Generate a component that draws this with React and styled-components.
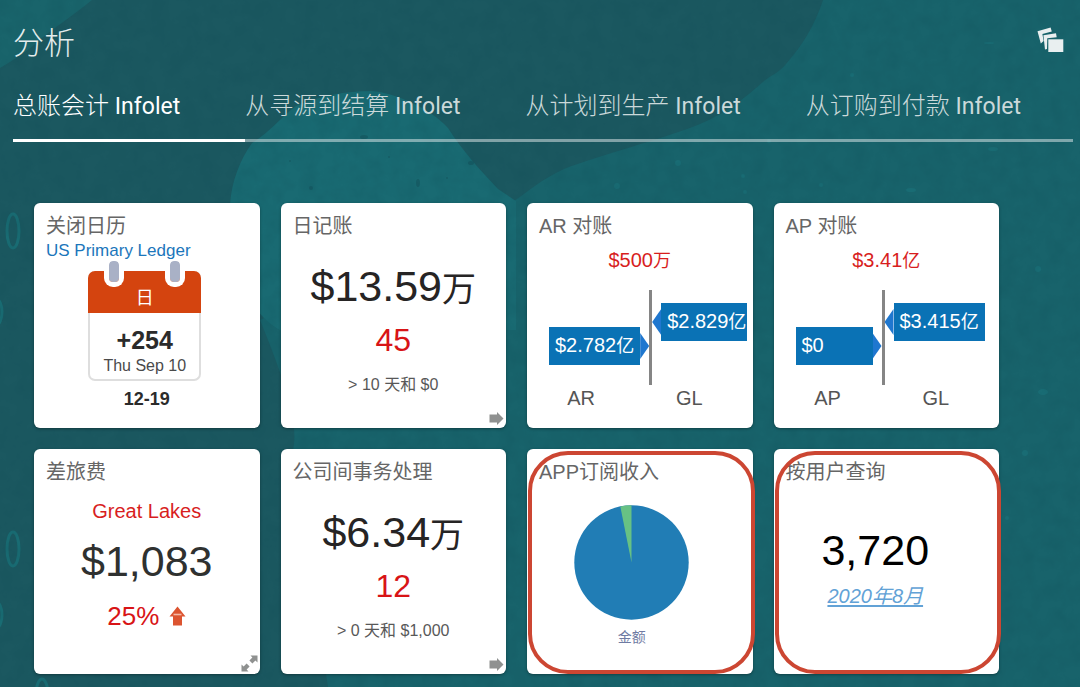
import React from "react";
import styled, { createGlobalStyle } from "styled-components";

const GlobalStyle = createGlobalStyle`
  *, *::before, *::after { box-sizing: border-box; }
  body {
    margin: 0;
    background: #1b575f;
    font-family: "Liberation Sans", "Noto Sans CJK SC", sans-serif;
    color: #2b2b2b;
  }
  h1, h2, p { margin: 0; font-weight: 400; }
  button { font: inherit; border: 0; padding: 0; background: none; cursor: pointer; }
`;

const Page = styled.div`
  position: relative;
  min-height: 100vh;
  overflow: hidden;
  padding-bottom: 13px;
`;

const Backdrop = styled.svg`
  position: absolute;
  inset: 0;
  width: 100%;
  height: 100%;
  z-index: -1;
`;

const Header = styled.header`
  display: flex;
  justify-content: space-between;
  align-items: flex-start;
  padding: 21px 16px 0 13px;
`;

const PageTitle = styled.h1`
  font-size: 31px;
  line-height: 46px;
  font-weight: 300;
  color: #e3ecec;
`;

const IconButton = styled.button`
  display: flex;
  padding: 5px 0;
  color: #e9eff0;
`;

const TabBar = styled.div`
  display: flex;
  margin: 23px 7px 0 13px;
`;

const Tab = styled.button`
  flex: 0 0 auto;
  padding: 0 65px 16px 0;
  border-bottom: 3px solid ${(p) => (p.$active ? "#ffffff" : "rgba(255,255,255,0.45)")};
  color: ${(p) => (p.$active ? "#ffffff" : "#cbd9da")};
  font-family: Roboto, "Noto Sans CJK SC", sans-serif;
  font-size: 24px;
  line-height: 32px;
  font-weight: 300;
  text-align: left;
  white-space: nowrap;

  &:last-child { flex: 1 0 auto; padding-right: 0; }
`;

const TabLatin = styled.span`
  font-size: 23px;
  font-weight: 400;
`;

const Grid = styled.main`
  display: grid;
  grid-template-columns: repeat(4, minmax(0, 1fr));
  gap: 21px;
  padding: 61px 81px 0 34px;
`;

const Card = styled.section`
  position: relative;
  display: flex;
  flex-direction: column;
  min-height: 225px;
  padding-top: 9px;
  border-radius: 6px;
  background: #fff;
  box-shadow: 0 1px 3px rgba(0, 0, 0, 0.35);

  &::after {
    content: "";
    display: ${(p) => (p.$marked ? "block" : "none")};
    position: absolute;
    inset: 2px -2px 0 1px;
    border: 4px solid #cc4632;
    border-radius: 40px;
    pointer-events: none;
  }
`;

const CardTitle = styled.h2`
  padding-left: 12px;
  font-size: 20px;
  line-height: 28px;
  color: #666;
`;

const LedgerLink = styled.a`
  padding-left: 12px;
  font-size: 17px;
  line-height: 22px;
  color: #1b76bb;
  text-decoration: none;
`;

const Calendar = styled.div`
  position: relative;
  align-self: center;
  width: 113px;
  margin: 9px 4px 0 0;
  border: 2px solid #dedede;
  border-top: 0;
  border-radius: 7px;
  text-align: center;
`;

const CalendarHead = styled.div`
  margin: 0 -2px;
  padding-top: 12px;
  border-radius: 7px 7px 0 0;
  background: #d4440f;
  color: #fff;
  font-size: 18px;
  line-height: 30px;
`;

const CalendarRing = styled.span`
  position: absolute;
  top: -10px;
  ${(p) => p.$side}: 14px;
  width: 20px;
  height: 26px;
  border: 5px solid #fff;
  border-top: 0;
  border-radius: 9px / 4px 4px 9px 9px;
  background: #a9b1c6;
  background-clip: padding-box;
`;

const DayCount = styled.p`
  padding-top: 13px;
  font-size: 25px;
  line-height: 28px;
  font-weight: 700;
`;

const DayLabel = styled.p`
  padding-bottom: 1px;
  font-size: 16px;
  line-height: 24px;
  color: #4a4a4a;
`;

const Period = styled.p`
  margin-top: 6px;
  font-size: 18px;
  line-height: 24px;
  font-weight: 700;
  text-align: center;
`;

const Stack = styled.div`
  display: flex;
  flex-direction: column;
  align-items: center;
  padding-top: ${(p) => p.$top}px;
  padding-right: ${(p) => p.$right || 0}px;
`;

const Amount = styled.p`
  font-size: 43px;
  line-height: 50px;
  color: ${(p) => p.$color || "#262424"};
`;

const Unit = styled.span`
  font-size: ${(p) => p.$size}px;
`;

const Count = styled.p`
  margin-top: 6px;
  font-size: 32px;
  line-height: 40px;
  color: #d81416;
`;

const Condition = styled.p`
  margin-top: 13px;
  font-size: 16px;
  line-height: 24px;
  color: #585858;
`;

const Alert = styled.p`
  font-size: 20px;
  line-height: 24px;
  color: #d81e1e;
  text-align: center;
`;

const Change = styled.p`
  display: flex;
  align-items: center;
  gap: 10px;
  margin-top: 14px;
  font-size: 26px;
  line-height: 32px;
  color: #d81416;
`;

const Balance = styled.div`
  display: flex;
  height: 95px;
  margin: 17px 6px 0 22px;
  overflow: hidden;
`;

const Divider = styled.div`
  flex: none;
  width: 3px;
  background: #858585;
`;

const Flag = styled.div`
  flex: none;
  display: flex;
  flex-direction: ${(p) => (p.$side === "left" ? "row" : "row-reverse")};
  align-items: center;
  align-self: flex-start;
  margin-top: ${(p) => (p.$side === "left" ? 37 : 13)}px;

  &::after {
    content: "";
    width: 9px;
    height: 26px;
    background: #1f77cf;
    clip-path: ${(p) =>
      p.$side === "left"
        ? "polygon(0 0, 100% 50%, 0 100%)"
        : "polygon(100% 0, 0 50%, 100% 100%)"};
  }
`;

const FlagBody = styled.span`
  min-width: 77px;
  padding: 0 6px;
  background: #0a72b5;
  color: #fff;
  font-size: 20px;
  line-height: 37px;
  white-space: nowrap;
`;

const Sides = styled.div`
  display: grid;
  grid-template-columns: 1fr 1fr;
  padding: 1px 9px 0 0;
  font-size: 20px;
  line-height: 24px;
  color: #555;
  text-align: center;
`;

const ChartLabel = styled.p`
  margin-top: 7px;
  font-size: 14px;
  line-height: 20px;
  color: #6f7ba3;
`;

const MonthLink = styled.a`
  margin-top: 7px;
  font-size: 20px;
  line-height: 28px;
  font-style: italic;
  color: #62a2d6;
  text-decoration: underline;
  text-underline-offset: 2px;
`;

const CornerButton = styled.button`
  position: absolute;
  right: 2px;
  bottom: 2px;
  display: flex;
  color: #8f9190;
`;

function Wallpaper() {
  return (
    <Backdrop viewBox="0 0 1080 687" preserveAspectRatio="xMidYMid slice" aria-hidden="true">
      <defs>
        <filter
          id="grain"
          x="0"
          y="0"
          width="100%"
          height="100%"
          colorInterpolationFilters="sRGB"
        >
          <feTurbulence type="fractalNoise" baseFrequency="0.06" numOctaves="4" seed="4" />
          <feColorMatrix values="0 0 0 0 0.05  0 0 0 0 0.28  0 0 0 0 0.32  2 0 0 0 -0.7" />
        </filter>
      </defs>
      <rect width="1080" height="687" fill="#1b5860" />
      <path d="M0 0H92C70 18 50 30 34 45C20 56 10 62 0 68Z" fill="#19646b" />
      <path
        d="M823 0C815 25 802 46 786 64C780 72 770 76 764 81C748 96 722 116 695 126C662 139 600 155 564 169C540 180 528 192 514 201L260 320C280 370 300 420 293 450C300 520 315 600 328 687H1080V0Z"
        fill="#18636b"
      />
      <path
        d="M230 204C232 180 240 160 252 143C270 132 282 116 296 106C320 96 345 91 372 91C395 93 430 108 448 128C462 150 480 170 498 189L516 201V330H280C250 315 222 260 230 204Z"
        fill="#196a72"
      />
      <g fill="#145059" opacity="0.5">
        <ellipse cx="364" cy="137" rx="4" ry="2" />
        <ellipse cx="418" cy="183" rx="2" ry="4" />
        <ellipse cx="471" cy="163" rx="3" ry="2" />
        <circle cx="290" cy="161" r="1" />
        <circle cx="389" cy="157" r="1" />
        <circle cx="311" cy="188" r="2" />
        <circle cx="447" cy="178" r="1" />
      </g>
      <g fill="#1b757d" opacity="0.5">
        <circle cx="678" cy="163" r="3" />
        <circle cx="617" cy="186" r="3" />
        <circle cx="769" cy="141" r="2" />
        <circle cx="743" cy="176" r="2" />
        <circle cx="745" cy="192" r="2" />
        <circle cx="821" cy="185" r="2" />
        <circle cx="852" cy="75" r="2" />
        <ellipse cx="911" cy="190" rx="5" ry="2" />
        <ellipse cx="993" cy="149" rx="5" ry="2" />
        <ellipse cx="989" cy="43" rx="5" ry="1" />
        <ellipse cx="1043" cy="392" rx="5" ry="3" />
        <circle cx="1038" cy="269" r="3" />
        <circle cx="1007" cy="518" r="2" />
        <circle cx="1025" cy="453" r="3" />
      </g>
      <g fill="none" stroke="#196c73" strokeWidth="3">
        <ellipse cx="13" cy="231" rx="6" ry="17" />
        <ellipse cx="13" cy="549" rx="6" ry="17" />
        <ellipse cx="-4" cy="312" rx="6" ry="13" />
        <ellipse cx="-4" cy="615" rx="6" ry="13" />
        <ellipse cx="42" cy="695" rx="6" ry="16" />
      </g>
      <rect width="1080" height="687" filter="url(#grain)" opacity="0.15" />
    </Backdrop>
  );
}

function StackIcon() {
  return (
    <svg width="27" height="27" viewBox="0 0 27 27" fill="currentColor" aria-hidden="true">
      <path d="M0.5 5.2L13.6 1.6L14.8 5.4L5.4 8L6.6 15L3.8 17.4Z" />
      <path d="M6.4 9.2L19 7.2L19.7 11.3L10.3 12.2L10 23L8 23.4Z" />
      <rect x="11.3" y="13.3" width="15" height="12.7" />
    </svg>
  );
}

function ArrowRightIcon() {
  return (
    <svg width="15" height="15" viewBox="0 0 15 15" fill="currentColor" aria-hidden="true">
      <path d="M0.5 3.5H8V1L14.5 7.5L8 14V11.5H0.5Z" />
    </svg>
  );
}

function ExpandIcon() {
  return (
    <svg width="17" height="17" viewBox="0 0 17 17" fill="currentColor" aria-hidden="true">
      <path d="M9.5 0.5H16.5V7.5L14.4 5.6L11.4 8.6L8.4 5.6L11.4 2.6Z" />
      <path d="M7.5 16.5H0.5V9.5L2.6 11.4L5.6 8.4L8.6 11.4L5.6 14.4Z" />
    </svg>
  );
}

function ArrowUpIcon() {
  return (
    <svg width="17" height="20" viewBox="0 0 17 20" aria-hidden="true">
      <path d="M8.5 0.5L16.5 10.5H13V19.5H4V10.5H0.5Z" fill="#dc5430" />
      <path d="M4.5 8.5H12.5" stroke="#f3b9a6" strokeWidth="1.6" />
    </svg>
  );
}

function Pie() {
  return (
    <svg width="115" height="115" viewBox="0 0 115 115" role="img" aria-label="金额">
      <circle cx="57.5" cy="57.5" r="57.2" fill="#217db5" />
      <path d="M57.5 57.5L46.3 1.4A57.2 57.2 0 0 1 57.5 0.3Z" fill="#67c184" />
    </svg>
  );
}

const TABS = ["总账会计", "从寻源到结算", "从计划到生产", "从订购到付款"];

function JournalCard({ title, amount, count, condition }) {
  return (
    <Card>
      <CardTitle>{title}</CardTitle>
      <Stack $top={21}>
        <Amount>
          {amount}
          <Unit $size={34}>万</Unit>
        </Amount>
        <Count>{count}</Count>
        <Condition>{condition}</Condition>
      </Stack>
      <CornerButton type="button" aria-label={title}>
        <ArrowRightIcon />
      </CornerButton>
    </Card>
  );
}

function BalanceCard({ title, difference, differenceUnit, side, left, leftUnit, right }) {
  return (
    <Card>
      <CardTitle>{title}</CardTitle>
      <Stack $top={8}>
        <Alert>
          {difference}
          <Unit $size={18}>{differenceUnit}</Unit>
        </Alert>
      </Stack>
      <Balance>
        <Flag $side="left">
          <FlagBody>
            {left}
            <Unit $size={18}>{leftUnit}</Unit>
          </FlagBody>
        </Flag>
        <Divider />
        <Flag $side="right">
          <FlagBody>
            {right}
            <Unit $size={18}>亿</Unit>
          </FlagBody>
        </Flag>
      </Balance>
      <Sides>
        <span>{side}</span>
        <span>GL</span>
      </Sides>
    </Card>
  );
}

export default function App() {
  return (
    <Page>
      <GlobalStyle />
      <Wallpaper />
      <Header>
        <PageTitle>分析</PageTitle>
        <IconButton type="button" aria-label="Infolet">
          <StackIcon />
        </IconButton>
      </Header>
      <TabBar role="tablist">
        {TABS.map((name, i) => (
          <Tab key={name} type="button" role="tab" aria-selected={i === 0} $active={i === 0}>
            {name} <TabLatin>Infolet</TabLatin>
          </Tab>
        ))}
      </TabBar>
      <Grid>
        <Card>
          <CardTitle>关闭日历</CardTitle>
          <LedgerLink href="#ledger">US Primary Ledger</LedgerLink>
          <Calendar>
            <CalendarHead>日</CalendarHead>
            <CalendarRing $side="left" />
            <CalendarRing $side="right" />
            <DayCount>+254</DayCount>
            <DayLabel>Thu Sep 10</DayLabel>
          </Calendar>
          <Period>12-19</Period>
        </Card>

        <JournalCard title="日记账" amount="$13.59" count="45" condition="> 10 天和 $0" />

        <BalanceCard
          title="AR 对账"
          difference="$500"
          differenceUnit="万"
          side="AR"
          left="$2.782"
          leftUnit="亿"
          right="$2.829"
        />

        <BalanceCard
          title="AP 对账"
          difference="$3.41"
          differenceUnit="亿"
          side="AP"
          left="$0"
          right="$3.415"
        />

        <Card>
          <CardTitle>差旅费</CardTitle>
          <Stack $top={13}>
            <Alert>Great Lakes</Alert>
            <Stack $top={13}>
              <Amount $color="#2f3130">$1,083</Amount>
            </Stack>
            <Change>
              25% <ArrowUpIcon />
            </Change>
          </Stack>
          <CornerButton type="button" aria-label="差旅费">
            <ExpandIcon />
          </CornerButton>
        </Card>

        <JournalCard title="公司间事务处理" amount="$6.34" count="12" condition="> 0 天和 $1,000" />

        <Card $marked>
          <CardTitle>APP订阅收入</CardTitle>
          <Stack $top={19} $right={16}>
            <Pie />
            <ChartLabel>金额</ChartLabel>
          </Stack>
        </Card>

        <Card $marked>
          <CardTitle>按用户查询</CardTitle>
          <Stack $top={39} $right={22}>
            <Amount $color="#000">3,720</Amount>
            <MonthLink href="#month">2020年8月</MonthLink>
          </Stack>
        </Card>
      </Grid>
    </Page>
  );
}
